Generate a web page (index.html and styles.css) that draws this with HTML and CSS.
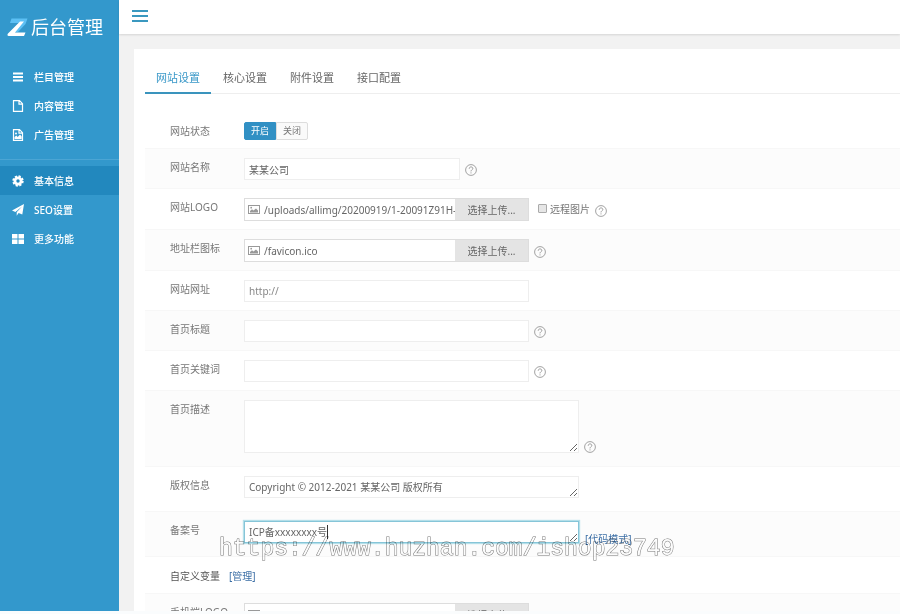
FILE: index.html
```html
<!DOCTYPE html>
<html lang="zh-CN">
<head>
	<meta charset="utf-8">
	<title>后台管理</title>
	<link rel="stylesheet" href="styles.css">
</head>
<body>
<svg class="defs" width="0" height="0">
	<symbol id="i-help" viewBox="0 0 12 12">
		<circle cx="6" cy="6" r="5.4" fill="none" stroke="currentColor" stroke-width=".9"/>
		<path d="M4.2 4.7C4.3 2.3 7.8 2.4 7.8 4.5C7.8 5.8 6 5.8 6 7.4M6 8.4V9.4" fill="none" stroke="currentColor" stroke-width="1"/>
	</symbol>
	<symbol id="i-pic" viewBox="0 0 12 9">
		<rect x=".5" y=".5" width="11" height="8" fill="#fff" stroke="currentColor"/>
		<path d="M2 7.5V6L4 4.2L5.5 5.5L8 3.5L10 5.5V7.5Z" fill="currentColor"/>
		<circle cx="3.2" cy="2.7" r=".9" fill="currentColor"/>
	</symbol>
</svg>
<div class="page">
	<aside class="sidebar">
		<div class="logo">
			<svg width="21" height="19" viewBox="0 0 21 19">
				<path d="M4.5 .5H20.5L18.5 6L11 14H7.5L14 5H3Z" fill="#5cc0f4"/>
				<path d="M13 3.5H17L8 14.5H18.5L17 18H2Q-.5 18 1 15.5Z" fill="#fff"/>
			</svg>
			<span>后台管理</span>
		</div>
		<nav>
			<a href="#">
				<svg width="12" height="12" viewBox="0 0 12 12"><path d="M1 2.5H11M1 6H11M1 9.5H11" stroke="#fff" stroke-width="2"/></svg>
				栏目管理
			</a>
			<a href="#">
				<svg width="12" height="12" viewBox="0 0 12 12"><path d="M1.5 .7H7.5L10.5 3.7V11.3H1.5ZM7 .7V4.2H10.5" fill="none" stroke="#fff" stroke-width="1.2"/></svg>
				内容管理
			</a>
			<a href="#">
				<svg width="12" height="12" viewBox="0 0 12 12"><path d="M1.5 .7H7.5L10.5 3.7V11.3H1.5ZM7 .7V4.2H10.5" fill="none" stroke="#fff" stroke-width="1.2"/><path d="M2.5 10V8L4.3 6.5L5.7 8L8 5.5L9.7 7.5V10Z" fill="#fff"/><circle cx="4" cy="4.5" r="1" fill="#fff"/></svg>
				广告管理
			</a>
			<hr>
			<a href="#" class="active">
				<svg width="12" height="12" viewBox="0 0 12 12"><circle cx="6" cy="6" r="3.1" fill="none" stroke="#fff" stroke-width="2.8"/><circle cx="6" cy="6" r="4.8" fill="none" stroke="#fff" stroke-width="1.8" stroke-dasharray="2.2 1.57"/></svg>
				基本信息
			</a>
			<a href="#">
				<svg width="12" height="12" viewBox="0 0 12 12"><path d="M12 0L10.3 10.5L6.6 9L4.7 11.7V8.3L10 2.5L3.4 8L0 6.6Z" fill="#fff"/></svg>
				SEO设置
			</a>
			<a href="#">
				<svg width="12" height="12" viewBox="0 0 12 12"><path d="M0 1H5.5V5.5H0ZM6.5 1H12V5.5H6.5ZM0 6.5H5.5V11H0ZM6.5 6.5H12V11H6.5Z" fill="#fff"/></svg>
				更多功能
			</a>
		</nav>
	</aside>

	<div class="main">
		<header class="topbar">
			<button type="button" class="menu" aria-label="菜单">
				<svg width="16" height="14" viewBox="0 0 16 14"><path d="M0 2H16M0 7H16M0 12H16" stroke="#3a98bf" stroke-width="2"/></svg>
			</button>
		</header>

		<div class="panel">
			<div class="tabs">
				<a href="#" class="current">网站设置</a>
				<a href="#">核心设置</a>
				<a href="#">附件设置</a>
				<a href="#">接口配置</a>
			</div>

			<form class="form">
				<div class="row">
					<span class="name">网站状态</span>
					<div class="switch">
						<button type="button" class="on">开启</button>
						<button type="button">关闭</button>
					</div>
				</div>
				<div class="row">
					<label class="name" for="web_name">网站名称</label>
					<input type="text" id="web_name" class="text short" value="某某公司">
					<svg class="help"><use href="#i-help"/></svg>
				</div>
				<div class="row">
					<label class="name" for="web_logo">网站LOGO</label>
					<div class="upload">
						<svg class="pic"><use href="#i-pic"/></svg>
						<input type="text" id="web_logo" value="/uploads/allimg/20200919/1-20091Z91H-1.png">
						<button type="button">选择上传...</button>
					</div>
					<label class="remote"><input type="checkbox">远程图片</label>
					<svg class="help"><use href="#i-help"/></svg>
				</div>
				<div class="row">
					<label class="name" for="web_ico">地址栏图标</label>
					<div class="upload">
						<svg class="pic"><use href="#i-pic"/></svg>
						<input type="text" id="web_ico" value="/favicon.ico">
						<button type="button">选择上传...</button>
					</div>
					<svg class="help"><use href="#i-help"/></svg>
				</div>
				<div class="row">
					<label class="name" for="web_url">网站网址</label>
					<input type="text" id="web_url" class="text" placeholder="http://">
				</div>
				<div class="row">
					<label class="name" for="web_title">首页标题</label>
					<input type="text" id="web_title" class="text">
					<svg class="help"><use href="#i-help"/></svg>
				</div>
				<div class="row">
					<label class="name" for="web_keywords">首页关键词</label>
					<input type="text" id="web_keywords" class="text">
					<svg class="help"><use href="#i-help"/></svg>
				</div>
				<div class="row area">
					<label class="name" for="web_desc">首页描述</label>
					<textarea id="web_desc" class="tall"></textarea>
					<svg class="help"><use href="#i-help"/></svg>
				</div>
				<div class="row area">
					<label class="name" for="web_copyright">版权信息</label>
					<textarea id="web_copyright">Copyright © 2012-2021 某某公司 版权所有</textarea>
				</div>
				<div class="row area">
					<label class="name" for="web_record">备案号</label>
					<div class="record">
						<textarea id="web_record" class="focused">ICP备xxxxxxxx号</textarea>
						<i class="caret"></i>
					</div>
					<a href="#" class="code">[代码模式]</a>
				</div>
				<div class="row custom">
					<span>自定义变量</span>
					<a href="#">[管理]</a>
				</div>
				<div class="row">
					<label class="name" for="wap_logo">手机端LOGO</label>
					<div class="upload">
						<svg class="pic"><use href="#i-pic"/></svg>
						<input type="text" id="wap_logo" value="/uploads/allimg/20200919/1-200919140.png">
						<button type="button">选择上传...</button>
					</div>
				</div>
			</form>
		</div>
	</div>
	<div class="watermark">https://www.huzhan.com/ishop23749</div>
</div>
</body>
</html>
```

FILE: styles.css
```css
* {
  box-sizing: border-box;
}
body {
  margin: 0;
  padding-bottom: 3px;
  background: #fafcfd;
  color: #777;
  font: 10px/18px "Noto Sans", "Noto Sans CJK SC", sans-serif;
}
input,
textarea,
button {
  font: inherit;
  color: inherit;
}
a {
  color: #3b6ea5;
  text-decoration: none;
}
.defs {
  position: absolute;
}
.page {
  position: relative;
  display: flex;
  height: calc(100vh - 3px);
  overflow: hidden;
  background: #f2f2f2;
}

/* sidebar */
.sidebar {
  flex: none;
  width: 119px;
  background: #3398cc;
}
.logo {
  display: flex;
  align-items: center;
  gap: 3px;
  height: 62px;
  padding: 0 0 8px 7px;
  color: #fff;
  font-size: 18px;
  font-weight: 400;
}
.sidebar nav a {
  display: flex;
  align-items: center;
  gap: 10px;
  height: 29px;
  padding-left: 12px;
  color: #fff;
  font-weight: 500;
}
.sidebar nav a.active {
  background: #2288be;
}
.sidebar hr {
  height: 1px;
  margin: 10px 0 6px;
  border: 0;
  background: #4ba5d4;
}

/* main */
.main {
  flex: 1;
  min-width: 0;
}
.topbar {
  display: flex;
  align-items: center;
  height: 34px;
  padding: 0 13px 2px;
  background: #fff;
  box-shadow: 0 1px 2px rgba(0, 0, 0, 0.12);
}
.menu {
  display: flex;
  padding: 0;
  border: 0;
  background: none;
}
.panel {
  margin: 15px 0 0 15px;
  padding: 14px 0 0 11px;
  background: #fff;
}
.tabs {
  display: flex;
  gap: 1px;
  height: 31px;
  border-bottom: 1px solid #eee;
}
.tabs a {
  height: 31px;
  padding: 0 11px;
  color: #666;
  font-size: 11px;
  line-height: 30px;
}
.tabs a.current {
  color: #3a98c8;
  border-bottom: 2px solid #3a94bd;
}

/* form rows */
.form {
  padding-top: 19px;
}
.row {
  display: flex;
  align-items: flex-start;
  padding: 9px 0 8px 25px;
  border-bottom: 1px solid #f7f7f7;
}
.row:nth-child(even) {
  background: #fcfcfc;
}
.row.area {
  padding-bottom: 13px;
}
.name {
  flex: none;
  width: 74px;
}
.switch {
  display: flex;
}
.switch button {
  width: 32px;
  height: 18px;
  padding: 0;
  border: 1px solid #ddd;
  border-radius: 0 2px 2px 0;
  background: #fafafa;
  font-size: 9px;
  line-height: 16px;
}
.switch button.on {
  border-color: #3190c4;
  border-radius: 2px 0 0 2px;
  background: #3190c4;
  color: #fff;
}
.text,
textarea {
  width: 285px;
  height: 22px;
  padding: 1px 4px;
  border: 1px solid #eee;
  background: #fff;
  color: #666;
  outline: 0;
}
.text.short {
  width: 216px;
}
.text::placeholder {
  color: #888;
}
textarea {
  display: block;
  width: 335px;
  overflow: hidden;
}
textarea.tall {
  height: 53px;
}
textarea.focused {
  border-color: #86c5d8;
  box-shadow: 0 0 1px 1px #b4dfe9;
}
.record {
  position: relative;
}
.caret {
  position: absolute;
  top: 4px;
  left: 83px;
  width: 1px;
  height: 14px;
  background: #333;
}
.help {
  flex: none;
  align-self: flex-end;
  width: 12px;
  height: 12px;
  margin: 0 0 4px 5px;
  color: #999;
}
.area .help {
  margin-bottom: 0;
}
.upload {
  display: flex;
  align-items: center;
  width: 285px;
  height: 23px;
  border: 1px solid #ddd;
  background: #fff;
}
.upload .pic {
  flex: none;
  width: 12px;
  height: 9px;
  margin: 0 4px 0 3px;
  color: #999;
}
.upload input {
  flex: 1;
  min-width: 0;
  height: 21px;
  padding: 0;
  border: 0;
  background: none;
  color: #666;
}
.upload button {
  width: 73px;
  height: 21px;
  padding: 0;
  border: 0;
  background: #e4e4e4;
  color: #666;
}
.remote {
  display: flex;
  align-items: center;
  gap: 3px;
  margin-left: 9px;
  height: 22px;
}
.remote input {
  appearance: none;
  width: 9px;
  height: 9px;
  margin: 0 0 2px;
  border: 1px solid #aaa;
  border-radius: 1px;
  background: #e6e6e6;
}
.code {
  align-self: flex-end;
  margin: 0 0 -2px 6px;
  line-height: 12px;
}
.row.custom {
  gap: 9px;
  padding: 10px 0 8px 25px;
  color: #555;
}
.watermark {
  position: absolute;
  top: 535px;
  left: 219px;
  color: #fff;
  font: 23px/28px "Liberation Mono", monospace;
  -webkit-text-stroke: 1px #777;
  paint-order: stroke fill;
  mix-blend-mode: multiply;
  pointer-events: none;
}
```
